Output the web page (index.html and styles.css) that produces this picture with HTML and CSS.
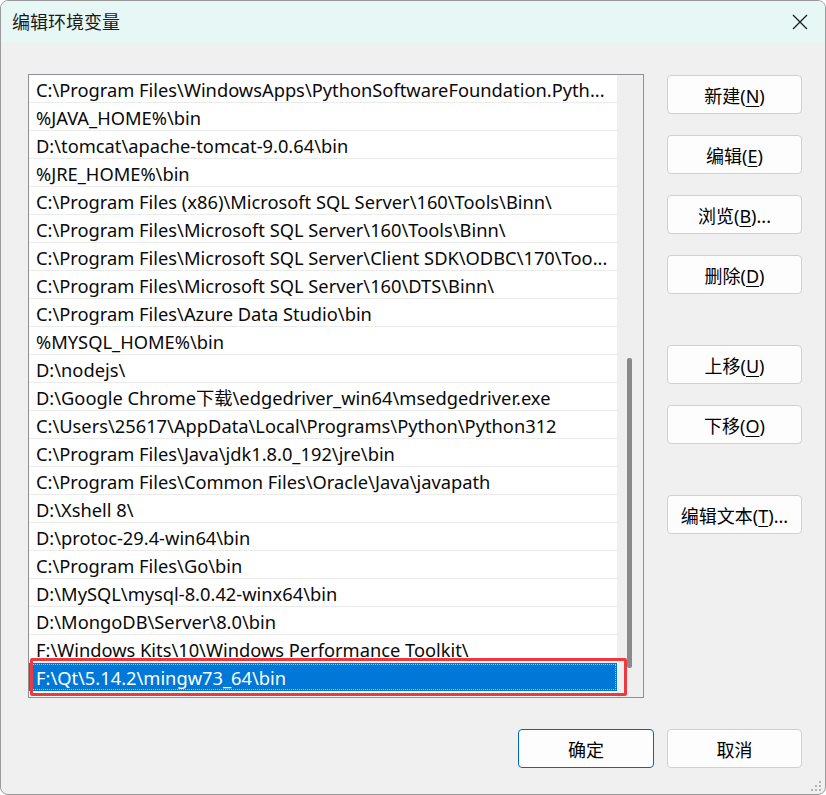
FILE: index.html
```html
<!DOCTYPE html>
<html lang="zh-CN">
<head>
<meta charset="utf-8">
<title>编辑环境变量</title>
<link rel="stylesheet" href="styles.css">
</head>
<body>
<div class="window">
  <div class="titlebar">
    <span class="title">编辑环境变量</span>
    <svg class="close" width="16" height="16" viewBox="0 0 16 16"><path d="M1 1 L15 15 M15 1 L1 15" stroke="#1b1b1b" stroke-width="1.3" fill="none"/></svg>
  </div>
  <div class="body">
    <div class="main">
      <div class="listbox">
        <div class="rows">
          <div class="row">C:\Program Files\WindowsApps\PythonSoftwareFoundation.Pyth...</div>
          <div class="row">%JAVA_HOME%\bin</div>
          <div class="row">D:\tomcat\apache-tomcat-9.0.64\bin</div>
          <div class="row">%JRE_HOME%\bin</div>
          <div class="row">C:\Program Files (x86)\Microsoft SQL Server\160\Tools\Binn\</div>
          <div class="row">C:\Program Files\Microsoft SQL Server\160\Tools\Binn\</div>
          <div class="row">C:\Program Files\Microsoft SQL Server\Client SDK\ODBC\170\Too...</div>
          <div class="row">C:\Program Files\Microsoft SQL Server\160\DTS\Binn\</div>
          <div class="row">C:\Program Files\Azure Data Studio\bin</div>
          <div class="row">%MYSQL_HOME%\bin</div>
          <div class="row">D:\nodejs\</div>
          <div class="row">D:\Google Chrome下载\edgedriver_win64\msedgedriver.exe</div>
          <div class="row">C:\Users\25617\AppData\Local\Programs\Python\Python312</div>
          <div class="row">C:\Program Files\Java\jdk1.8.0_192\jre\bin</div>
          <div class="row">C:\Program Files\Common Files\Oracle\Java\javapath</div>
          <div class="row">D:\Xshell 8\</div>
          <div class="row">D:\protoc-29.4-win64\bin</div>
          <div class="row">C:\Program Files\Go\bin</div>
          <div class="row">D:\MySQL\mysql-8.0.42-winx64\bin</div>
          <div class="row">D:\MongoDB\Server\8.0\bin</div>
          <div class="row">F:\Windows Kits\10\Windows Performance Toolkit\</div>
          <div class="row selected">F:\Qt\5.14.2\mingw73_64\bin</div>
        </div>
        <div class="scrolltrack"><div class="thumb"></div></div>
        <div class="highlight"></div>
      </div>
      <div class="buttons">
        <button class="btn">新建(<u>N</u>)</button>
        <button class="btn">编辑(<u>E</u>)</button>
        <button class="btn">浏览(<u>B</u>)...</button>
        <button class="btn">删除(<u>D</u>)</button>
        <button class="btn group">上移(<u>U</u>)</button>
        <button class="btn">下移(<u>O</u>)</button>
        <button class="btn group">编辑文本(<u>T</u>)...</button>
      </div>
    </div>
    <div class="footer">
      <button class="btn default">确定</button>
      <button class="btn">取消</button>
    </div>
  </div>
  <svg class="grip" width="12" height="12" viewBox="0 0 12 12" fill="#b4b4b4">
    <rect x="8" y="0" width="2" height="2"/>
    <rect x="4" y="4" width="2" height="2"/><rect x="8" y="4" width="2" height="2"/>
    <rect x="0" y="8" width="2" height="2"/><rect x="4" y="8" width="2" height="2"/><rect x="8" y="8" width="2" height="2"/>
  </svg>
</div>
</body>
</html>
```

FILE: styles.css
```css
html, body {
  margin: 0;
  padding: 0;
  background: #ffffff;
}

body {
  font-family: "Noto Sans", "Noto Sans CJK SC", sans-serif;
  color: #000;
}

.window {
  position: relative;
  box-sizing: border-box;
  width: 826px;
  height: 795px;
  border: 1px solid #9a9a9a;
  border-radius: 8px;
  background: #f0f0f0;
  overflow: hidden;
}

.titlebar {
  height: 42px;
  background: #e6f7f5;
  display: flex;
  align-items: center;
  justify-content: space-between;
  padding: 0 17px 0 11px;
}

.title {
  font-size: 18px;
  color: #1a1a1a;
  font-family: "Noto Sans CJK SC", sans-serif;
  position: relative;
  top: -1px;
}

.close {
  display: block;
}

.body {
  padding: 31px 0 0 27px;
}

.main {
  display: flex;
  gap: 23px;
}

.listbox {
  position: relative;
  box-sizing: border-box;
  width: 616px;
  height: 624px;
  border: 1px solid #8e9296;
  background: #ffffff;
  display: flex;
}

.rows {
  width: 588px;
}

.row {
  box-sizing: border-box;
  height: 28px;
  line-height: 24px;
  padding: 3px 0 0 7px;
  border-bottom: 1px solid #ebebeb;
  font-size: 18.3px;
  white-space: nowrap;
  overflow: hidden;
  color: #0a0a0a;
}

.row.selected {
  background: #0078d7;
  color: #ffffff;
  outline: 1px dotted #9cc8ef;
  outline-offset: -2px;
  border-bottom-color: #0078d7;
}

.scrolltrack {
  width: 26px;
  background: #efefef;
}

.thumb {
  width: 5px;
  height: 310px;
  margin: 283px 0 0 10px;
  background: #898989;
  border-radius: 2px;
}

.highlight {
  position: absolute;
  left: 1px;
  top: 583px;
  width: 591px;
  height: 32px;
  border: 3px solid #ee3a3f;
  border-radius: 2px;
}

.buttons {
  display: flex;
  flex-direction: column;
  gap: 21px;
  padding-top: 1px;
}

.btn {
  box-sizing: border-box;
  width: 135px;
  height: 39px;
  padding: 0;
  background: #fdfdfd;
  border: 1px solid #d0d0d0;
  border-radius: 4px;
  font-family: "Noto Sans", "Noto Sans CJK SC", sans-serif;
  font-size: 18px;
  color: #000;
}

.btn u {
  text-underline-offset: 3px;
}

.btn.group {
  margin-top: 30px;
}

.footer {
  display: flex;
  justify-content: flex-end;
  gap: 13px;
  padding: 31px 23px 0 0;
}

.btn.default {
  width: 136px;
  border-color: #0067c0;
}

.grip {
  position: absolute;
  right: 2px;
  bottom: 1px;
}
```
